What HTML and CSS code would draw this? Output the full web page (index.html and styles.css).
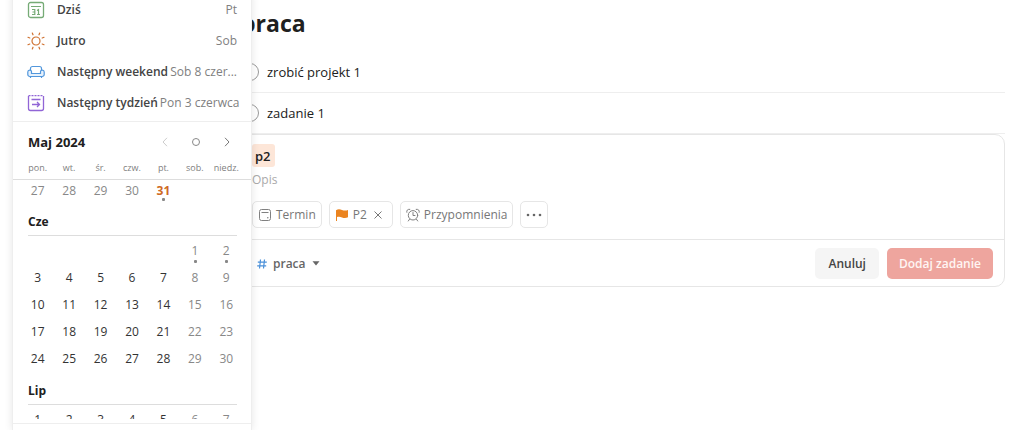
FILE: index.html
```html
<!DOCTYPE html>
<html lang="pl">
<head>
<meta charset="utf-8">
<title>praca</title>
<link rel="stylesheet" href="styles.css">
</head>
<body>
<main class="project">
  <h1 class="project-title">praca</h1>
  <ul class="tasks">
    <li class="task"><input class="task-check" type="checkbox" id="t1"><label for="t1">zrobić projekt 1</label></li>
    <li class="task"><input class="task-check" type="checkbox" id="t2"><label for="t2">zadanie 1</label></li>
  </ul>
  <form class="editor">
    <div class="editor-body">
      <input class="editor-name" type="text" value="p2" aria-label="Nazwa zadania">
      <input class="editor-desc" type="text" placeholder="Opis" aria-label="Opis">
      <div class="chips">
        <button class="chip" type="button">
          <svg width="14" height="14" viewBox="0 0 14 14" fill="none" stroke="#808080"><rect x="1.500" y="1.500" width="11" height="11" rx="2"/><path d="M3.500 4.500h7"/><circle cx="9.800" cy="9.800" r=".8" fill="#808080" stroke="none"/></svg>
          <span>Termin</span>
        </button>
        <button class="chip" type="button">
          <svg width="14" height="14" viewBox="0 0 14 14" fill="#eb8420"><path d="M1 2.200C3 1 5 1.200 7 2s4 .8 6 0v7.300c-2 .9-4 .9-6 .1s-3.500-.8-5-.3V13H1z"/></svg>
          <span>P2</span>
          <svg class="chip-clear" width="10" height="10" viewBox="0 0 10 10" stroke="#777"><path d="M1.500 1.500l7 7M8.500 1.500l-7 7"/></svg>
        </button>
        <button class="chip" type="button">
          <svg width="14" height="14" viewBox="0 0 14 14" fill="none" stroke="#808080" stroke-linecap="round"><circle cx="7" cy="7.300" r="4.700"/><path d="M7 4.500v3h2M3.500 11.300L2.300 13M10.500 11.300l1.200 1.700M.8 4.300C.3 2.500 1.500 1 3.800 1.300M13.200 4.300c.5-1.800-.7-3.300-3-3"/></svg>
          <span>Przypomnienia</span>
        </button>
        <button class="chip" type="button" aria-label="Więcej">
          <svg width="16" height="4" viewBox="0 0 16 4" fill="#666"><circle cx="2" cy="2" r="1.300"/><circle cx="8" cy="2" r="1.300"/><circle cx="14" cy="2" r="1.300"/></svg>
        </button>
      </div>
    </div>
    <div class="editor-footer">
      <button class="picker" type="button">
        <svg width="10" height="10" viewBox="0 0 10 10" fill="none" stroke="#4a90d9" stroke-width="1.200"><path d="M3.500.5l-1 9M7.500.5l-1 9M.8 3.200h9M.2 6.800h9"/></svg>
        <span>praca</span>
        <svg width="8" height="5" viewBox="0 0 8 5" fill="#666"><path d="M.5.3h7L4 4.600z"/></svg>
      </button>
      <button class="btn" type="button">Anuluj</button>
      <button class="btn btn-primary" type="submit">Dodaj zadanie</button>
    </div>
  </form>
</main>

<section class="scheduler" aria-label="Termin">
  <div class="presets">
    <button class="preset" type="button">
      <svg width="18" height="18" viewBox="0 0 18 18" fill="none" stroke="#76ab76"><rect x="1.500" y="1.500" width="15" height="15" rx="2" stroke-width="1.300"/><path d="M4 5.500h10"/><path stroke-width="1.200" d="M5 8.500h2.800v5H5M5.500 11h2M10 9.500l1.500-1v5M10 13.500h3"/></svg>
      <span class="preset-name">Dziś</span><span class="preset-date">Pt</span>
    </button>
    <button class="preset" type="button">
      <svg width="18" height="18" viewBox="0 0 18 18" fill="none" stroke="#cf7130" stroke-width="1.200" stroke-linecap="round"><circle cx="9" cy="9" r="4"/><path d="M6 2.800L5.300 1M12 2.800l.7-1.800M15.200 6l1.800-.7M15.200 12l1.800.7M12 15.200l.7 1.800M6 15.200L5.300 17M2.800 12l-1.800.7M2.800 6L1 5.300"/></svg>
      <span class="preset-name">Jutro</span><span class="preset-date">Sob</span>
    </button>
    <button class="preset" type="button">
      <svg width="18" height="18" viewBox="0 0 18 18" fill="#e6f1fc" stroke="#5297dc" stroke-width="1.200"><path fill="none" d="M3.500 7V5.500a2 2 0 0 1 2-2h7a2 2 0 0 1 2 2V7"/><path d="M4.500 10.500V8.800C4.500 6.500.8 6.500.8 9v2.500a2 2 0 0 0 2 2h12.400a2 2 0 0 0 2-2V9c0-2.500-3.700-2.500-3.700-.2v1.700zM3.500 13.500V15M14.500 13.500V15"/></svg>
      <span class="preset-name">Następny weekend</span><span class="preset-date">Sob 8 czer...</span>
    </button>
    <button class="preset" type="button">
      <svg width="18" height="18" viewBox="0 0 18 18" fill="none" stroke="#9165d6" stroke-width="1.300"><path d="M1.500 2v12.500a2 2 0 0 0 2 2h11a2 2 0 0 0 2-2V2"/><path d="M1.500 1.700h15" stroke-dasharray="2 1"/><path d="M4.500 5.500h9M5 10.500h7.500M10 8l2.500 2.500L10 13"/></svg>
      <span class="preset-name">Następny tydzień</span><span class="preset-date">Pon 3 czerwca</span>
    </button>
  </div>

  <header class="cal-head">
    <h2 class="cal-title">Maj 2024</h2>
    <button class="nav" type="button" aria-label="Poprzedni miesiąc" disabled><svg width="10" height="10" viewBox="0 0 10 10" fill="none" stroke="#ccc"><path d="M7 .8L3 5l4 4.200"/></svg></button>
    <button class="nav" type="button" aria-label="Dzisiaj"><svg width="10" height="10" viewBox="0 0 10 10" fill="none" stroke="#888"><circle cx="5" cy="5" r="3.500"/></svg></button>
    <button class="nav" type="button" aria-label="Następny miesiąc"><svg width="10" height="10" viewBox="0 0 10 10" fill="none" stroke="#777"><path d="M3 .8L7 5 3 9.200"/></svg></button>
  </header>
  <div class="week weekdays">
    <span>pon.</span><span>wt.</span><span>śr.</span><span>czw.</span><span>pt.</span><span>sob.</span><span>niedz.</span>
  </div>
  <div class="months">
    <div class="week">
      <button class="day muted">27</button><button class="day muted">28</button><button class="day muted">29</button><button class="day muted">30</button><button class="day today busy">31</button>
    </div>
    <h3 class="month-name">Cze</h3>
    <div class="week">
      <button class="day muted busy first-sat">1</button><button class="day muted busy">2</button>
      <button class="day">3</button><button class="day">4</button><button class="day">5</button><button class="day">6</button><button class="day">7</button><button class="day muted">8</button><button class="day muted">9</button>
      <button class="day">10</button><button class="day">11</button><button class="day">12</button><button class="day">13</button><button class="day">14</button><button class="day muted">15</button><button class="day muted">16</button>
      <button class="day">17</button><button class="day">18</button><button class="day">19</button><button class="day">20</button><button class="day">21</button><button class="day muted">22</button><button class="day muted">23</button>
      <button class="day">24</button><button class="day">25</button><button class="day">26</button><button class="day">27</button><button class="day">28</button><button class="day muted">29</button><button class="day muted">30</button>
    </div>
    <h3 class="month-name">Lip</h3>
    <div class="week">
      <button class="day">1</button><button class="day">2</button><button class="day">3</button><button class="day">4</button><button class="day">5</button><button class="day muted">6</button><button class="day muted">7</button>
    </div>
  </div>
  <footer class="scheduler-foot"></footer>
</section>
</body>
</html>
```
FILE: styles.css
```css
* { box-sizing: border-box; }
body {
  margin: 0;
  min-height: 100vh;
  position: relative;
  overflow: hidden;
  background: #fff;
  color: #202020;
  font: 12px/18px "Open Sans", "Noto Sans", sans-serif;
}
button, input { font: inherit; color: inherit; }
button { border: 0; padding: 0; background: none; }
svg { flex: none; display: block; }
h1, h2, h3, ul { margin: 0; padding: 0; }

.project { padding: 6px 19px 0 241px; }
.project-title { font-size: 23px; line-height: 34px; margin-bottom: 12px; }
.tasks { list-style: none; }
.task {
  display: flex;
  align-items: center;
  gap: 8px;
  height: 41px;
  border-bottom: 1px solid #eee;
  font-size: 13px;
}
.task-check {
  appearance: none;
  width: 18px;
  height: 18px;
  margin: 0;
  border: 1px solid #999;
  border-radius: 50%;
}

.editor { border: 1px solid #e6e6e6; border-radius: 10px; }
.editor-body { padding: 9px 10px 11px; }
.editor-name {
  display: block;
  width: 23px;
  height: 23px;
  padding: 0 3px;
  border: 0;
  border-radius: 3px;
  background: #fde6d8;
  font-size: 13px;
  font-weight: 600;
}
.editor-desc {
  display: block;
  width: 100%;
  height: 24px;
  padding: 0;
  border: 0;
  background: none;
}
.editor-desc::placeholder { color: #aaa; opacity: 1; }
.chips { display: flex; gap: 7px; margin-top: 10px; }
.chip {
  display: flex;
  align-items: center;
  gap: 4px;
  height: 27px;
  padding: 0 5px;
  border: 1px solid #e6e6e6;
  border-radius: 5px;
  color: #777;
}
.chip-clear { margin: 0 4px 0 2px; }
.editor-footer {
  display: flex;
  align-items: center;
  gap: 8px;
  padding: 8px 11px 7px 15px;
  border-top: 1px solid #e6e6e6;
}
.picker {
  display: flex;
  align-items: center;
  gap: 6px;
  margin-right: auto;
  color: #666;
  font-weight: 600;
}
.btn {
  height: 31px;
  padding: 0 13px;
  border-radius: 5px;
  background: #f5f5f5;
  color: #444;
  font-weight: 600;
}
.btn-primary { background: #eea59e; color: #fff5f3; padding: 0 12px; }

.scheduler {
  position: absolute;
  top: -6px;
  bottom: 0;
  left: 12px;
  width: 240px;
  display: flex;
  flex-direction: column;
  background: #fff;
  border: 1px solid #eee;
  border-width: 0 1px;
  box-shadow: 0 0 8px rgba(0, 0, 0, .1);
}
.presets { padding-bottom: 3px; border-bottom: 1px solid #eee; }
.preset {
  display: flex;
  align-items: center;
  width: 100%;
  height: 31px;
  padding: 0 14px;
}
.preset-name { margin: 0 2px 0 12px; white-space: nowrap; font-weight: 600; color: #444; }
.preset-date {
  flex: 1;
  white-space: nowrap;
  text-align: right;
  color: #808080;
}
.cal-head { display: flex; align-items: center; padding: 10px 9px 6px 15px; }
.cal-title { flex: 1; font-size: 13px; line-height: 20px; }
.nav { display: grid; place-items: center; width: 31px; height: 20px; }
.week { display: grid; grid-template-columns: repeat(7, 1fr); padding: 0 9px; }
.weekdays {
  padding: 1px 9px 2px;
  border-bottom: 1px solid #ddd;
  color: #808080;
  font-size: 9px;
  text-align: center;
}
.weekdays span { white-space: nowrap; justify-self: center; }
.months { flex: 1; min-height: 0; overflow: hidden; margin-bottom: 4px; }
.day { position: relative; height: 27px; color: #333; }
.months > .week:first-child .day { height: 22px; }
.muted { color: #888; }
.today { color: #cf6a25; font-weight: 700; }
.busy::after {
  content: "";
  position: absolute;
  left: 50%;
  bottom: 1px;
  width: 3px;
  height: 3px;
  margin-left: -1px;
  border-radius: 1px;
  background: #888;
}
.first-sat { grid-column: 6; }
.month-name {
  margin: 0 14px 1px 15px;
  padding: 11px 0 5px;
  border-bottom: 1px solid #ddd;
  font-size: 12px;
  line-height: 17px;
}
.month-name ~ .month-name { padding-top: 10px; }
.scheduler-foot { height: 7px; border-top: 1px solid #eee; }
```
